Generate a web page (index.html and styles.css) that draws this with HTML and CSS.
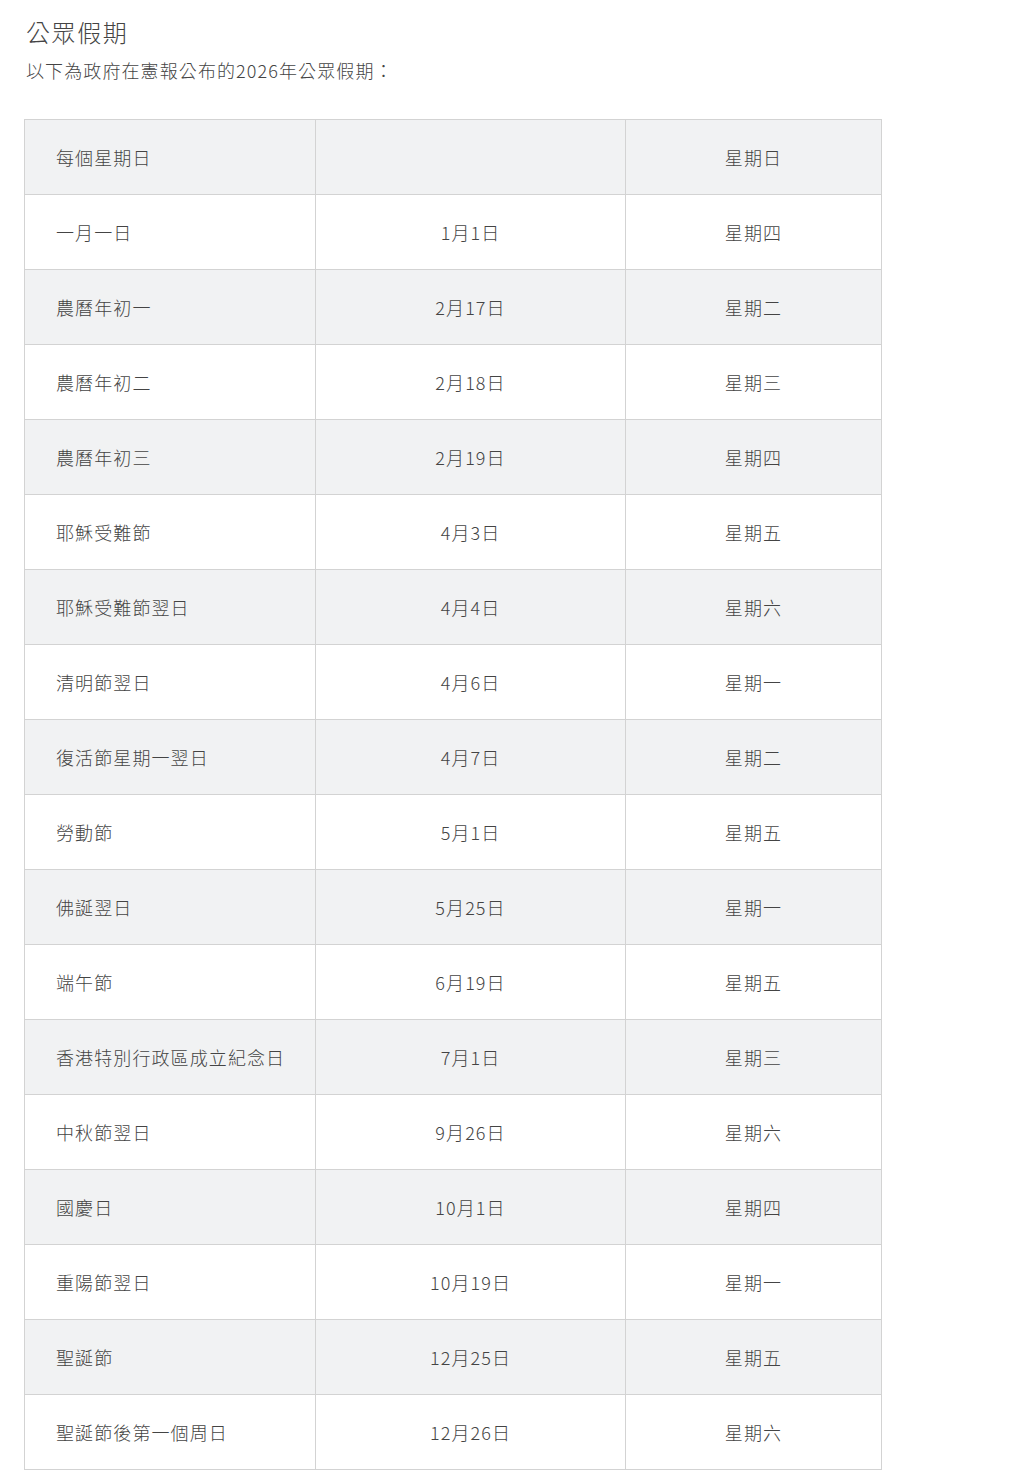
FILE: index.html
```html
<!DOCTYPE html>
<html lang="zh-Hant">
<head>
<meta charset="utf-8">
<link rel="stylesheet" href="styles.css">
</head>
<body>
<div class="page">
  <h2 class="title">公眾假期</h2>
  <p class="intro">以下為政府在憲報公布的2026年公眾假期：</p>
  <table class="holidays">
    <colgroup><col class="c1"><col class="c2"><col class="c3"></colgroup>
    <tbody>
      <tr><td>每個星期日</td><td></td><td>星期日</td></tr>
      <tr><td>一月一日</td><td>1月1日</td><td>星期四</td></tr>
      <tr><td>農曆年初一</td><td>2月17日</td><td>星期二</td></tr>
      <tr><td>農曆年初二</td><td>2月18日</td><td>星期三</td></tr>
      <tr><td>農曆年初三</td><td>2月19日</td><td>星期四</td></tr>
      <tr><td>耶穌受難節</td><td>4月3日</td><td>星期五</td></tr>
      <tr><td>耶穌受難節翌日</td><td>4月4日</td><td>星期六</td></tr>
      <tr><td>清明節翌日</td><td>4月6日</td><td>星期一</td></tr>
      <tr><td>復活節星期一翌日</td><td>4月7日</td><td>星期二</td></tr>
      <tr><td>勞動節</td><td>5月1日</td><td>星期五</td></tr>
      <tr><td>佛誕翌日</td><td>5月25日</td><td>星期一</td></tr>
      <tr><td>端午節</td><td>6月19日</td><td>星期五</td></tr>
      <tr><td>香港特別行政區成立紀念日</td><td>7月1日</td><td>星期三</td></tr>
      <tr><td>中秋節翌日</td><td>9月26日</td><td>星期六</td></tr>
      <tr><td>國慶日</td><td>10月1日</td><td>星期四</td></tr>
      <tr><td>重陽節翌日</td><td>10月19日</td><td>星期一</td></tr>
      <tr><td>聖誕節</td><td>12月25日</td><td>星期五</td></tr>
      <tr><td>聖誕節後第一個周日</td><td>12月26日</td><td>星期六</td></tr>
    </tbody>
  </table>
</div>
</body>
</html>
```
FILE: styles.css
```css
html, body {
  margin: 0;
  padding: 0;
  background: #ffffff;
}
body {
  font-family: "Noto Sans CJK TC", "Noto Sans", "Liberation Sans", sans-serif;
  font-weight: 300;
  color: #444444;
}
.page {
  padding: 16px 0 0 24px;
}
.title {
  margin: 0 0 0 2px;
  font-size: 24px;
  line-height: 32px;
  font-weight: 300;
  letter-spacing: 1.6px;
  color: #444444;
}
.intro {
  margin: 8px 0 0 2px;
  font-size: 18px;
  line-height: 28px;
  letter-spacing: 1.1px;
  color: #444444;
}
.holidays {
  margin-top: 35px;
  border-collapse: collapse;
  width: 857px;
  table-layout: fixed;
  font-size: 18px;
  letter-spacing: 1.1px;
}
.c1 { width: 291px; }
.c2 { width: 310px; }
.c3 { width: 256px; }
.holidays td {
  border: 1px solid #d3d3d3;
  height: 74px;
  padding: 0;
  text-align: center;
  vertical-align: middle;
  color: #444444;
}
.holidays td:first-child {
  text-align: left;
  padding-left: 31px;
}
.holidays tr:nth-child(odd) td {
  background: #f1f2f3;
}
```
